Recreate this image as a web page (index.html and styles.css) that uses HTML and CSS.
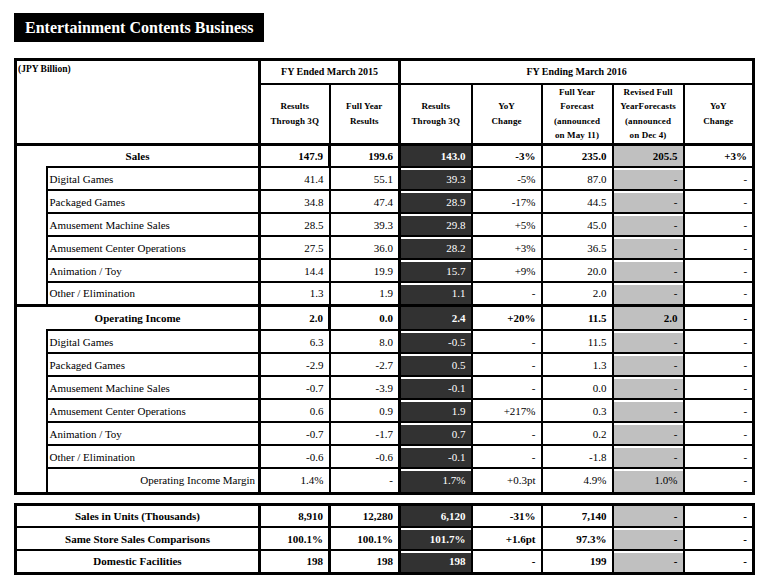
FILE: index.html
```html
<!DOCTYPE html>
<html>
<head>
<meta charset="utf-8">
<link rel="stylesheet" href="styles.css">
</head>
<body>
<div class="title">Entertainment Contents Business</div>
<table class="grid main">
  <colgroup>
    <col class="w-ind"><col class="w-lab"><col class="w-c1"><col class="w-c2"><col class="w-c3"><col class="w-c4"><col class="w-c5"><col class="w-c6"><col class="w-c7">
  </colgroup>
  <tr class="hr1">
    <th colspan="2" rowspan="2" class="unit">(JPY Billion)</th>
    <th colspan="2" class="grp sep-r">FY Ended March 2015</th>
    <th colspan="5" class="grp">FY Ending March 2016</th>
  </tr>
  <tr class="hr2">
    <th>Results<br>Through 3Q</th>
    <th class="sep-r">Full Year<br>Results</th>
    <th>Results<br>Through 3Q</th>
    <th>YoY<br>Change</th>
    <th>Full Year<br>Forecast<br>(announced<br>on May 11)</th>
    <th>Revised Full<br>YearForecasts<br>(announced<br>on Dec 4)</th>
    <th>YoY<br>Change</th>
  </tr>
  <tr class="total first">
    <td colspan="2" class="tlabel">Sales</td>
    <td>147.9</td><td class="sep-r">199.6</td><td class="dark">143.0</td><td>-3%</td><td>235.0</td><td class="gray">205.5</td><td>+3%</td>
  </tr>
  <tr class="sub"><td class="ind"></td><td class="lab">Digital Games</td><td>41.4</td><td class="sep-r">55.1</td><td class="dark">39.3</td><td>-5%</td><td>87.0</td><td class="gray">-</td><td>-</td></tr>
  <tr class="sub"><td class="ind"></td><td class="lab">Packaged Games</td><td>34.8</td><td class="sep-r">47.4</td><td class="dark">28.9</td><td>-17%</td><td>44.5</td><td class="gray">-</td><td>-</td></tr>
  <tr class="sub"><td class="ind"></td><td class="lab">Amusement Machine Sales</td><td>28.5</td><td class="sep-r">39.3</td><td class="dark">29.8</td><td>+5%</td><td>45.0</td><td class="gray">-</td><td>-</td></tr>
  <tr class="sub"><td class="ind"></td><td class="lab">Amusement Center Operations</td><td>27.5</td><td class="sep-r">36.0</td><td class="dark">28.2</td><td>+3%</td><td>36.5</td><td class="gray">-</td><td>-</td></tr>
  <tr class="sub"><td class="ind"></td><td class="lab">Animation / Toy</td><td>14.4</td><td class="sep-r">19.9</td><td class="dark">15.7</td><td>+9%</td><td>20.0</td><td class="gray">-</td><td>-</td></tr>
  <tr class="sub"><td class="ind"></td><td class="lab">Other / Elimination</td><td>1.3</td><td class="sep-r">1.9</td><td class="dark">1.1</td><td>-</td><td>2.0</td><td class="gray">-</td><td>-</td></tr>
  <tr class="total thick">
    <td colspan="2" class="tlabel">Operating Income</td>
    <td>2.0</td><td class="sep-r">0.0</td><td class="dark">2.4</td><td>+20%</td><td>11.5</td><td class="gray">2.0</td><td>-</td>
  </tr>
  <tr class="sub"><td class="ind"></td><td class="lab">Digital Games</td><td>6.3</td><td class="sep-r">8.0</td><td class="dark">-0.5</td><td>-</td><td>11.5</td><td class="gray">-</td><td>-</td></tr>
  <tr class="sub"><td class="ind"></td><td class="lab">Packaged Games</td><td>-2.9</td><td class="sep-r">-2.7</td><td class="dark">0.5</td><td>-</td><td>1.3</td><td class="gray">-</td><td>-</td></tr>
  <tr class="sub"><td class="ind"></td><td class="lab">Amusement Machine Sales</td><td>-0.7</td><td class="sep-r">-3.9</td><td class="dark">-0.1</td><td>-</td><td>0.0</td><td class="gray">-</td><td>-</td></tr>
  <tr class="sub"><td class="ind"></td><td class="lab">Amusement Center Operations</td><td>0.6</td><td class="sep-r">0.9</td><td class="dark">1.9</td><td>+217%</td><td>0.3</td><td class="gray">-</td><td>-</td></tr>
  <tr class="sub"><td class="ind"></td><td class="lab">Animation / Toy</td><td>-0.7</td><td class="sep-r">-1.7</td><td class="dark">0.7</td><td>-</td><td>0.2</td><td class="gray">-</td><td>-</td></tr>
  <tr class="sub"><td class="ind"></td><td class="lab">Other / Elimination</td><td>-0.6</td><td class="sep-r">-0.6</td><td class="dark">-0.1</td><td>-</td><td>-1.8</td><td class="gray">-</td><td>-</td></tr>
  <tr class="sub last"><td class="ind"></td><td class="lab margin">Operating Income Margin</td><td>1.4%</td><td class="sep-r">-</td><td class="dark">1.7%</td><td>+0.3pt</td><td>4.9%</td><td class="gray">1.0%</td><td>-</td></tr>
</table>
<table class="grid kpi">
  <colgroup>
    <col class="w-ind"><col class="w-lab"><col class="w-c1"><col class="w-c2"><col class="w-c3"><col class="w-c4"><col class="w-c5"><col class="w-c6"><col class="w-c7">
  </colgroup>
  <tr class="krow first"><td colspan="2" class="tlabel">Sales in Units (Thousands)</td><td>8,910</td><td class="sep-r">12,280</td><td class="dark">6,120</td><td>-31%</td><td>7,140</td><td class="gray">-</td><td>-</td></tr>
  <tr class="krow"><td colspan="2" class="tlabel">Same Store Sales Comparisons</td><td>100.1%</td><td class="sep-r">100.1%</td><td class="dark">101.7%</td><td>+1.6pt</td><td>97.3%</td><td class="gray">-</td><td>-</td></tr>
  <tr class="krow"><td colspan="2" class="tlabel">Domestic Facilities</td><td>198</td><td class="sep-r">198</td><td class="dark">198</td><td>-</td><td>199</td><td class="gray">-</td><td>-</td></tr>
</table>
</body>
</html>
```

FILE: styles.css
```css
html, body {
  margin: 0;
  padding: 0;
  background: #fff;
}
body {
  font-family: "Liberation Serif", "Times New Roman", serif;
  color: #000;
  padding: 13px 0 0 14px;
}
.title {
  width: 239px;
  height: 29px;
  background: #000;
  color: #fff;
  font-weight: bold;
  font-size: 16px;
  line-height: 29px;
  padding-left: 11px;
}
.grid {
  border-collapse: collapse;
  table-layout: fixed;
  width: 741px;
  border: 3px solid #000;
}
.main { margin-top: 16px; }
.kpi { margin-top: 8px; }
.w-ind { width: 31px; }
.w-lab { width: 213px; }
.w-c1 { width: 70px; }
.w-c2 { width: 70px; }
.w-c3 { width: 72px; }
.w-c4 { width: 70px; }
.w-c5 { width: 71px; }
.w-c6 { width: 71px; }
.w-c7 { width: 70px; }

.grid td, .grid th {
  border: 2px solid #000;
  padding: 0 5px 0 3px;
  font-size: 11px;
  line-height: 14px;
  text-align: right;
  white-space: nowrap;
  overflow: hidden;
}
.grid th {
  font-weight: bold;
  text-align: center;
  padding: 0;
}
.grid .sep-r { border-right-width: 3px; }
.grid td:nth-child(2), .grid td.tlabel { border-right-width: 3px; }

.hr1 { height: 24px; }
.hr1 th { border-bottom: 1px solid #000; font-size: 10px; }
.hr1 th.unit {
  text-align: left;
  vertical-align: top;
  font-size: 9.5px;
  line-height: 12px;
  padding: 2px 1px;
  border-right-width: 3px;
  border-bottom: 3px solid #000;
}
.hr2 { height: 58px; }
.hr2 th {
  font-size: 9px;
  line-height: 14.5px;
  border-bottom: 3px solid #000;
  letter-spacing: 0.1px;
}

.main tr.sub { height: 23px; }
.main tr.total.first { height: 23px; }
.main tr.total.thick { height: 25px; }
.main tr.sub.last { height: 25px; }
.total td { font-weight: bold; }
.total.thick td { border-top: 3px solid #000; }
.total td.tlabel {
  text-align: center;
  padding: 0;
  border-bottom: none;
}
.sub td.ind {
  border-top: none;
  border-bottom: none;
  padding: 0;
}
.sub.last td { border-bottom: 3px solid #000; }
.sub td.lab { text-align: left; padding-left: 2px; }
.sub td.lab.margin { text-align: right; padding-right: 3px; }

.dark {
  background: #323232;
  color: #fff;
}
.gray { background: #c0c0c0; }
.sub td.dark, .sub td.gray, .krow:not(.first) td.dark, .krow:not(.first) td.gray {
  box-shadow: inset 0 2px 0 #fff;
}

.krow { height: 23px; }
.krow td { font-weight: bold; }
.krow td.tlabel { text-align: center; padding: 0; }
```
